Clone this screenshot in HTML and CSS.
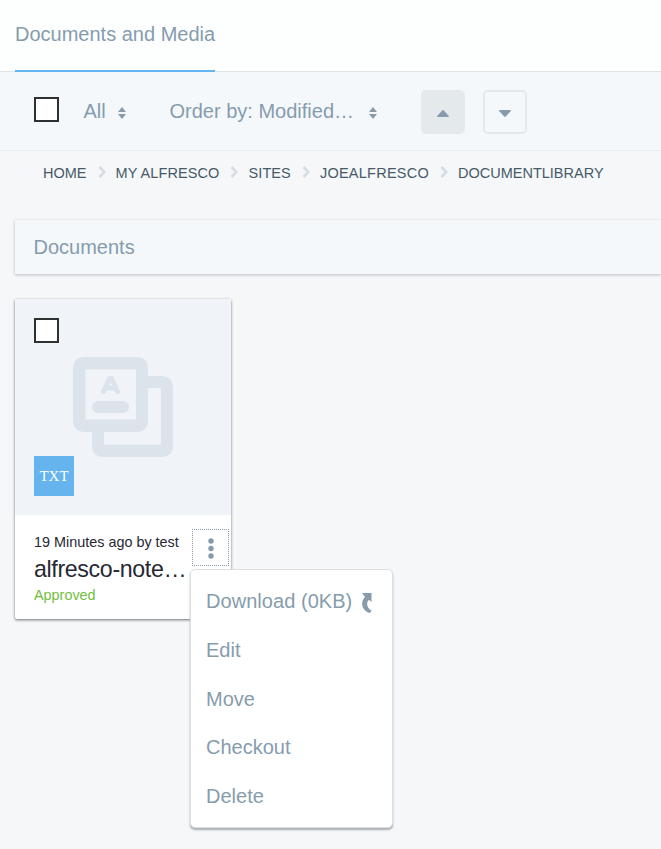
FILE: index.html
```html
<!DOCTYPE html>
<html lang="en">
<head>
<meta charset="utf-8">
<title>Documents and Media</title>
<link rel="stylesheet" href="styles.css">
</head>
<body>
<nav class="tabs"><a class="tab">Documents and Media</a></nav>
<div class="toolbar">
  <span class="checkbox"></span>
  <span class="filter">All</span>
  <svg class="sort" viewBox="0 0 8 12"><path d="M0 5 4 0l4 5zM0 7h8l-4 5z"/></svg>
  <span class="order">Order by: Modified…</span>
  <svg class="sort" viewBox="0 0 8 12"><path d="M0 5 4 0l4 5zM0 7h8l-4 5z"/></svg>
  <span class="sort-button active"><svg viewBox="0 0 12 7"><path d="M.6 7Q-.3 6.600.4 5.700L5.200.5Q6-.3 6.800.5l4.800 5.200Q12.300 6.600 11.400 7z"/></svg></span>
  <span class="sort-button"><svg viewBox="0 0 12 7"><path d="M.6 0Q-.3.4.4 1.300l4.800 5.200Q6 7.300 6.800 6.500l4.800-5.200Q12.300.4 11.400 0z"/></svg></span>
</div>
<div class="breadcrumb">
  <span>HOME</span><svg viewBox="0 0 8 12"><path d="M1.500 1 6.300 6l-4.800 5"/></svg>
  <span class="loose">MY ALFRESCO</span><svg viewBox="0 0 8 12"><path d="M1.500 1 6.300 6l-4.800 5"/></svg>
  <span class="loose">SITES</span><svg viewBox="0 0 8 12"><path d="M1.500 1 6.300 6l-4.800 5"/></svg>
  <span class="looser">JOEALFRESCO</span><svg viewBox="0 0 8 12"><path d="M1.500 1 6.300 6l-4.800 5"/></svg>
  <span>DOCUMENTLIBRARY</span>
</div>
<h2 class="section">Documents</h2>
<article class="card">
  <div class="preview">
    <span class="checkbox"></span>
    <svg class="placeholder" viewBox="0 0 100 100">
      <path fill-rule="evenodd" d="M12 0H63Q75 0 75 12V63Q75 75 63 75H12Q0 75 0 63V12Q0 0 12 0zM12.500 12.500V62.500H63V12.500z"/>
      <path d="M75 19H88Q100 19 100 31V88Q100 100 88 100H31Q19 100 19 88V75H31V87.500H88V31H75z"/>
      <rect x="19" y="44" width="37" height="12" rx="6"/>
      <path class="stroke" d="M30.500 34.500 36.500 21.500H38.500L44.500 34.500M33 31h9"/>
    </svg>
    <span class="type">TXT</span>
  </div>
  <div class="details">
    <div class="modified">19 Minutes ago by test</div>
    <div class="name">alfresco-note…</div>
    <div class="status">Approved</div>
    <span class="more"><svg viewBox="0 0 6 21"><circle cx="3" cy="3" r="2.700"/><circle cx="3" cy="10.500" r="2.700"/><circle cx="3" cy="18" r="2.700"/></svg></span>
    <div class="menu">
      <a>Download (0KB) <svg viewBox="0 0 10 20"><path d="M0 0H9.500V9L7 6.700C4 9.500 4.500 14.500 9.500 17.500L8 20C-.5 17.500-2 9 3 4z"/></svg></a>
      <a>Edit</a>
      <a>Move</a>
      <a>Checkout</a>
      <a>Delete</a>
    </div>
  </div>
</article>
</body>
</html>
```
FILE: styles.css
```css
* { box-sizing: border-box; }
body {
  margin: 0;
  height: 849px;
  overflow: hidden;
  background: #f5f7f9;
  color: #869cad;
  font: 20px/24px "Liberation Sans", Arial, sans-serif;
}
svg { display: block; flex: none; fill: #869cad; }
.tabs {
  height: 72px;
  padding-left: 15px;
  background: #fdfefe;
  border-bottom: 1px solid #dfe4e8;
}
.tab {
  display: inline-block;
  height: 72px;
  padding-top: 22px;
  border-bottom: 2px solid #65b6f0;
  white-space: nowrap;
}
.toolbar {
  display: flex;
  align-items: center;
  height: 79px;
  padding: 1px 0 0 34px;
  background: #f4f8fb;
  border-bottom: 1px solid #e9edf0;
}
.checkbox {
  flex: none;
  display: block;
  width: 25px;
  height: 25px;
  background: #fff;
  border: 2px solid #2e3132;
}
.toolbar .checkbox { margin: -4px 24px 0 0; }
.filter { width: 35px; }
.order { width: 200px; white-space: nowrap; }
.filter, .order { margin-top: -2px; text-indent: .5px; }
.sort { width: 8px; height: 12px; margin-top: 3px; }
.filter + .sort { margin-right: 43px; }
.order + .sort { margin-right: 44px; }
.sort-button {
  display: flex;
  justify-content: center;
  width: 44px;
  height: 44px;
  margin-right: 18px;
  padding-top: 18px;
  border: 2px solid #e4e9ec;
  border-radius: 5px;
}
.sort-button.active { background: #e4e9ec; }
.sort-button svg { width: 12px; height: 7px; }
.breadcrumb {
  display: flex;
  align-items: center;
  height: 43px;
  padding-left: 43px;
  color: #485a68;
  font-size: 14.5px;
  white-space: nowrap;
}
.breadcrumb svg {
  width: 8px;
  height: 12px;
  margin: -2px 10px 0 11px;
  fill: none;
  stroke: #d5dce2;
  stroke-width: 2.6;
}
.breadcrumb .loose { letter-spacing: .1px; }
.breadcrumb .looser { letter-spacing: .25px; }
.section {
  height: 54px;
  margin: 26px 0 0 15px;
  padding: 15px 18.5px;
  background: #f4f8fb;
  box-shadow: 0 1px 3px #b9bec3;
  font-size: 20px;
  font-weight: 400;
}
.card {
  width: 216px;
  height: 320px;
  margin: 25px 0 0 15px;
  background: #fff;
  border-radius: 2px;
  box-shadow: 0 1px 3px #6c7072;
}
.preview {
  display: grid;
  grid-template-rows: 39px 99px 40px;
  height: 216px;
  padding: 19px;
  background: #f0f4f9;
  border-radius: 2px 2px 0 0;
}
.placeholder {
  width: 100px;
  height: 100px;
  margin-left: 39px;
  fill: #dce3ea;
}
.placeholder .stroke {
  fill: none;
  stroke: #dce3ea;
  stroke-width: 5;
  stroke-linecap: round;
  stroke-linejoin: round;
}
.type {
  width: 40px;
  height: 40px;
  background: #65b4ee;
  color: #fff;
  font: 15px/40px "Liberation Serif", serif;
  text-align: center;
}
.details {
  position: relative;
  height: 104px;
  padding: 16px 0 0 19px;
  white-space: nowrap;
}
.modified, .status { font-size: 14.4px; line-height: 22px; }
.modified { color: #272833; }
.name {
  color: #272833;
  font-size: 23.2px;
  line-height: 32px;
  letter-spacing: -.35px;
}
.status { color: #73bd42; line-height: 20px; }
.more {
  position: absolute;
  top: 14px;
  left: 177px;
  display: grid;
  place-items: center;
  width: 37px;
  height: 37px;
  padding-top: 2px;
  border: 1px dotted #869cad;
}
.more svg { width: 6px; height: 21px; }
.menu {
  position: absolute;
  top: 54px;
  left: 175px;
  width: 203px;
  height: 259px;
  padding: 7px 15px;
  background: #fff;
  border: 1px solid #dcdfe2;
  border-radius: 5px;
  box-shadow: 0 2px 2px #a9adaf;
}
.menu a { display: flex; align-items: center; height: 48.7px; }
.menu a:first-child { letter-spacing: .05px; }
.menu svg { width: 10px; height: 20px; margin: 3px 0 0 9.3px; }
```
